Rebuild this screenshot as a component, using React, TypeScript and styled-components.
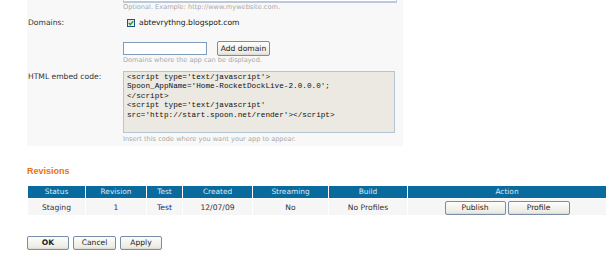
import React from 'react';
import styled, { createGlobalStyle } from 'styled-components';

const GlobalStyle = createGlobalStyle`
  html, body {
    margin: 0;
    padding: 0;
    background: #ffffff;
  }
  body {
    font-family: "DejaVu Sans", Verdana, sans-serif;
    font-size: 7.6px;
    color: #333333;
  }
`

const Page = styled.div`
  width: 610px;
  height: 273px;
  overflow: hidden;
  padding-left: 27px;
  box-sizing: border-box;
`

const Panel = styled.div`
  width: 376px;
  background: #f8f8f8;
  padding: 0 6px 2px 1px;
  box-sizing: border-box;
`

const FieldRow = styled.div<{ $top?: number }>`
  display: grid;
  grid-template-columns: 95px 1fr;
  margin-top: ${p => p.$top ?? 0}px;
`

const Label = styled.div<{ $top?: number }>`
  line-height: 10px;
  margin-top: ${p => p.$top ?? 0}px;
  color: #333;
`

const Content = styled.div`
  display: flex;
  flex-direction: column;
`

const TopInput = styled.div`
  height: 20px;
  margin-top: -17px;
  border: 1px solid #bccbdb;
  border-bottom-width: 2px;
  background: #ffffff;
  box-sizing: border-box;
`

const Hint = styled.div<{ $top?: number }>`
  font-size: 6.6px;
  line-height: 9px;
  color: #a9a9a9;
  margin-top: ${p => p.$top ?? 0}px;
`

const CheckLine = styled.label`
  display: flex;
  align-items: center;
  gap: 4px;
  padding-left: 4px;
  height: 10px;
  line-height: 10px;
  color: #222;
`

const CheckBox = styled.span`
  display: inline-flex;
  align-items: center;
  justify-content: center;
  width: 8px;
  height: 8px;
  box-sizing: border-box;
  border: 1px solid #1c5180;
  background: linear-gradient(135deg, #dcdcd4, #ffffff);
`

const InputLine = styled.div`
  display: flex;
  align-items: center;
  gap: 10px;
  height: 15px;
  margin-top: 13px;
`

const TextInput = styled.input`
  width: 84px;
  height: 13px;
  box-sizing: border-box;
  border: 1px solid #7f9db9;
  background: #fff;
  padding: 0 2px;
  font: inherit;
  outline: none;
`

const Button = styled.button<{ $w: number; $h?: number; $bold?: boolean }>`
  width: ${p => p.$w}px;
  height: ${p => p.$h ?? 14}px;
  box-sizing: border-box;
  padding: 0;
  border: 1px solid #7a8da6;
  border-radius: 2px;
  background: linear-gradient(#fdfdfb, #ecebe4 85%, #d8d6cc);
  font-family: "DejaVu Sans", Verdana, sans-serif;
  font-size: 7.6px;
  font-weight: ${p => (p.$bold ? 700 : 400)};
  color: #1e1e1e;
  line-height: 1;
  cursor: pointer;
`

const CodeArea = styled.textarea`
  display: block;
  width: 272px;
  height: 62px;
  box-sizing: border-box;
  border: 1px solid #b4c6d6;
  background: #ebe9e1;
  padding: 1px 3px;
  margin: 0;
  font-family: "Liberation Mono", "Courier New", monospace;
  font-size: 7.7px;
  line-height: 9.4px;
  color: #111;
  resize: none;
  overflow: hidden;
  outline: none;
  white-space: pre;
`

const Heading = styled.h2`
  margin: 19px 0 0 0;
  font-family: "Liberation Sans", Arial, sans-serif;
  font-size: 9px;
  line-height: 12px;
  font-weight: 700;
  color: #e8720c;
`

const Table = styled.table`
  margin-top: 8px;
  width: 580px;
  table-layout: fixed;
  border-collapse: separate;
  border-spacing: 1px;
`

const Th = styled.th`
  height: 12px;
  padding: 0;
  background: #086a9d;
  color: #dfe9f1;
  font-weight: 400;
  font-size: 7.4px;
  text-align: center;
  line-height: 12px;
`

const Td = styled.td`
  height: 16px;
  padding: 0;
  background: #f6f6f6;
  text-align: center;
  font-size: 7.6px;
  color: #333;
`

const TestLink = styled.a`
  color: #26267a;
  text-decoration: none;
`

const ActionGroup = styled.div`
  display: flex;
  justify-content: center;
  align-items: flex-end;
  gap: 2px;
  height: 16px;
`

const FormButtons = styled.div`
  display: flex;
  gap: 4px;
  margin-top: 20px;
`

const code = `<script type='text/javascript'>
Spoon_AppName='Home-RocketDockLive-2.0.0.0';
</script>
<script type='text/javascript'
src='http://start.spoon.net/render'></script>`

const columns: { title: string; width: number }[] = [
  { title: 'Status', width: 57 },
  { title: 'Revision', width: 60 },
  { title: 'Test', width: 35 },
  { title: 'Created', width: 69 },
  { title: 'Streaming', width: 75 },
  { title: 'Build', width: 78 },
  { title: 'Action', width: 198 },
];

const CheckMark = () => (
  <svg width="6" height="6" viewBox="0 0 6 6">
    <path d="M0.8 3.1 L2.3 4.6 L5.2 1.2" fill="none" stroke="#21a121" strokeWidth="1.4" />
  </svg>
);

export default function App() {
  return (
    <Page>
      <GlobalStyle />
      <Panel>
        <FieldRow>
          <Label />
          <Content>
            <TopInput />
            <Hint>Optional. Example: http://www.mywebsite.com.</Hint>
          </Content>
        </FieldRow>

        <FieldRow $top={6}>
          <Label>Domains:</Label>
          <Content>
            <CheckLine>
              <CheckBox><CheckMark /></CheckBox>
              abtevrythng.blogspot.com
            </CheckLine>
            <InputLine>
              <TextInput type="text" />
              <Button $w={53} $h={15}>Add domain</Button>
            </InputLine>
            <Hint>Domains where the app can be displayed.</Hint>
          </Content>
        </FieldRow>

        <FieldRow $top={6}>
          <Label $top={1}>HTML embed code:</Label>
          <Content>
            <CodeArea readOnly defaultValue={code} spellCheck={false} />
            <Hint $top={2}>Insert this code where you want your app to appear.</Hint>
          </Content>
        </FieldRow>
      </Panel>

      <Heading>Revisions</Heading>
      <Table>
        <colgroup>
          {columns.map(c => (
            <col key={c.title} style={{ width: c.width }} />
          ))}
        </colgroup>
        <thead>
          <tr>
            {columns.map(c => (
              <Th key={c.title}>{c.title}</Th>
            ))}
          </tr>
        </thead>
        <tbody>
          <tr>
            <Td>Staging</Td>
            <Td>1</Td>
            <Td><TestLink href="#">Test</TestLink></Td>
            <Td>12/07/09</Td>
            <Td>No</Td>
            <Td>No Profiles</Td>
            <Td>
              <ActionGroup>
                <Button $w={61}>Publish</Button>
                <Button $w={62}>Profile</Button>
              </ActionGroup>
            </Td>
          </tr>
        </tbody>
      </Table>

      <FormButtons>
        <Button $w={42} $bold>OK</Button>
        <Button $w={43}>Cancel</Button>
        <Button $w={42}>Apply</Button>
      </FormButtons>
    </Page>
  );
}
